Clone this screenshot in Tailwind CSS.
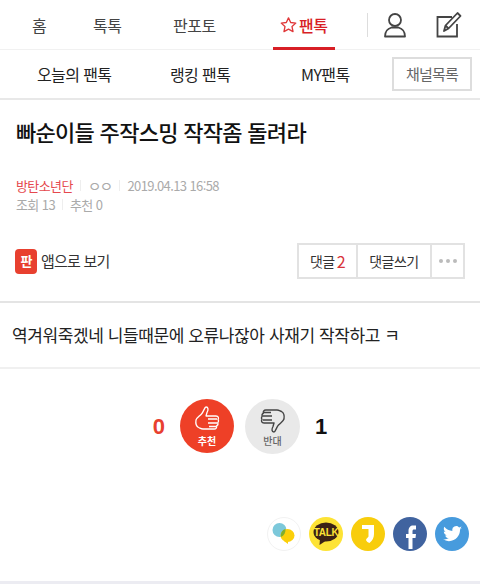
<!DOCTYPE html>
<html lang="ko">
<head>
  <meta charset="UTF-8">
  <title>팬톡</title>
  <script src="https://cdn.jsdelivr.net/npm/@tailwindcss/browser@4"></script>
</head>
<body class="w-[480px] h-[584px] overflow-hidden bg-white font-['Noto_Sans_CJK_KR','Noto_Sans',sans-serif] text-[#222]">

  <!-- top nav -->
  <nav class="h-[50px] flex items-center border-b border-[#f1f1f1] text-[16px] text-[#444] tracking-[-0.5px]">
    <a class="w-[80px] pl-[32px]">홈</a>
    <a class="w-[80px] pl-[13px]">톡톡</a>
    <a class="w-[107px] pl-[13px]">판포토</a>
    <a class="relative w-[101px] h-full flex items-center gap-[1px] pl-[12px] text-[#d81f26] font-medium">
      <svg width="19" height="18" viewBox="0 0 24 24" fill="none" stroke="#e0393a" stroke-width="1.8" stroke-linejoin="round"><path d="M12 2.500l2.900 6.200 6.800.8-5 4.600 1.300 6.700-6-3.300-6 3.300 1.300-6.700-5-4.600 6.800-.8z"/></svg>
      팬톡
      <span class="absolute left-[6px] bottom-[-1px] w-[62px] h-[3px] bg-[#d81f26]"></span>
    </a>
    <span class="w-px h-[24px] bg-[#ddd] -ml-[1px]"></span>
    <svg class="ml-[15px]" width="24" height="26" viewBox="0 0 24 26" fill="none" stroke="#444" stroke-width="1.800"><circle cx="12" cy="8" r="6"/><path d="M2 24.500c0-5 3-8 6.500-9h7c3.500 1 6.500 4 6.500 9z" stroke-linejoin="round"/></svg>
    <svg class="ml-[29px]" width="26" height="27" viewBox="0 0 26 27" fill="none" stroke="#444" stroke-width="1.800"><path d="M16 6H1.500v19.500H21V13"/><path d="M8 20l1.500-5.500L21.500 2l3 3-12 12.500z" stroke-linejoin="round"/><path d="M9.500 14.500l3 3"/></svg>
  </nav>

  <!-- sub nav -->
  <div class="h-[50px] flex items-center border-b-[2px] border-[#e8e8e8] text-[16px] text-[#222] tracking-[-0.6px]">
    <a class="w-[170px] pl-[37px]">오늘의 팬톡</a>
    <a class="w-[131px]">랭킹 팬톡</a>
    <a class="w-[91px]">MY팬톡</a>
    <a class="w-[80px] h-[34px] flex items-center justify-center border-2 border-[#ddd] text-[15px] tracking-[-0.8px] text-[#666]">채널목록</a>
  </div>

  <!-- title -->
  <h1 class="pl-[16px] pt-[15px] h-[76px] text-[22px] leading-[32px] font-medium text-[#111] tracking-[-0.7px]">빠순이들 주작스밍 작작좀 돌려라</h1>

  <!-- meta -->
  <div class="pl-[16px] text-[13px] leading-[19px] text-[#aaa] tracking-[-0.6px]">
    <div class="flex items-center h-[19px]">
      <span class="text-[#e5484d]">방탄소년단</span>
      <span class="w-px h-[11px] bg-[#eee] mx-[7px]"></span>
      <span class="text-[15px] leading-[19px] tracking-[-2px]">ㅇㅇ</span>
      <span class="w-px h-[11px] bg-[#eee] ml-[8px] mr-[7px]"></span>
      <span>2019.04.13 16:58</span>
    </div>
    <div class="flex items-center h-[19px]">
      <span>조회 13</span>
      <span class="w-px h-[11px] bg-[#eee] mx-[7px]"></span>
      <span>추천 0</span>
    </div>
  </div>

  <!-- app link + comment buttons -->
  <div class="h-[36px] mt-[29px] pr-[15px] pl-[15px] flex items-center justify-between">
    <div class="flex items-center gap-[4px] text-[15px] text-[#333] tracking-[-0.8px]">
      <span class="w-[22px] h-[25px] rounded-[4px] bg-[#e8402f] flex items-center justify-center text-white text-[13px] font-bold">판</span>
      앱으로 보기
    </div>
    <div class="flex h-[36px] border-2 border-[#e2e2e2] text-[14px] text-[#333] tracking-[-0.5px]">
      <span class="w-[59px] flex items-center justify-center gap-[2px] border-r-2 border-[#e2e2e2]">댓글 <b class="font-normal text-[16px] text-[#d8343a]">2</b></span>
      <span class="w-[74px] flex items-center justify-center border-r-2 border-[#e2e2e2]">댓글쓰기</span>
      <span class="w-[31px] flex items-center justify-center gap-[3px]">
        <i class="w-[4px] h-[4px] rounded-full bg-[#bbb]"></i><i class="w-[4px] h-[4px] rounded-full bg-[#bbb]"></i><i class="w-[4px] h-[4px] rounded-full bg-[#bbb]"></i>
      </span>
    </div>
  </div>

  <!-- body -->
  <div class="mt-[22px] h-[68px] border-y-[2px] border-t-[#e4e4e4] border-b-[#f0f0f0] pl-[12px] flex items-center text-[17px] text-[#222] tracking-[-0.4px]">역겨워죽겠네 니들때문에 오류나잖아 사재기 작작하고 ㅋ</div>

  <!-- votes -->
  <div class="mt-[28px] h-[58px] flex items-center">
    <span class="w-[165px] text-right text-[22px] font-bold text-[#e8402f] font-['Liberation_Sans',sans-serif]">0</span>
    <div class="ml-[15px] w-[54px] h-[54px] rounded-full bg-[#ee4027] flex flex-col items-center justify-center text-white">
      <svg width="26" height="27" viewBox="0 0 26 27" fill="none" stroke="#fff" stroke-width="1.300" stroke-linejoin="round"><path d="M12 1c2.500 0 2.500 3 1 5.500L12 10h10c2.500 0 3 2 2 3.500.8 1 .6 2.500-.3 3.200.5 1.300 0 2.600-1 3 .3 1.800-.7 3.300-2.500 3.300H9c-2 0-3-1-4.500-1.500C2 20 1.500 17 2 14c.5-2 3-3.500 5.500-6C9.500 6 10.500 1 12 1z"/><path d="M14 13h9M14 17h9M15 20.500h7"/></svg>
      <span class="text-[10px] leading-[12px] font-bold mt-[2px]">추천</span>
    </div>
    <div class="ml-[11px] w-[55px] h-[55px] rounded-full bg-[#e9e9e9] flex flex-col items-center justify-center text-[#666]">
      <svg width="26" height="27" viewBox="0 0 26 27" fill="none" stroke="#444" stroke-width="1.400" stroke-linejoin="round"><path d="M14 26c-2.500 0-2.500-3-1-5.500L14 17H4c-2.500 0-3-2-2-3.500-.8-1-.6-2.500.3-3.200-.5-1.300 0-2.600 1-3-.3-1.800.7-3.300 2.500-3.300h11.200c2 0 3 1 4.500 1.500C24 7 24.500 10 24 13c-.5 2-3 3.500-5.500 6-2 2-3 7-4.500 7z"/><path d="M12 14H3M12 10H3M11 6.500H4"/></svg>
      <span class="text-[10px] leading-[12px] font-medium mt-[2px]">반대</span>
    </div>
    <span class="ml-[15px] text-[22px] font-bold text-[#111] font-['Liberation_Sans',sans-serif]">1</span>
  </div>

  <!-- share -->
  <div class="mt-[62px] pr-[11px] flex justify-end gap-[8px]">
    <span class="w-[34px] h-[34px] rounded-full border border-[#f2f2f2] flex items-center justify-center">
      <svg width="26" height="26" viewBox="0 0 26 26"><circle cx="8.500" cy="9" r="7" fill="#7cc8da"/><ellipse cx="16.500" cy="14.500" rx="7" ry="6.500" fill="#fbcf0a"/><path d="M13 20l4 3 0-3z" fill="#fbcf0a"/><path d="M9.900 15.900a7 7 0 0 0 4.500-7.800 6.500 6.500 0 0 0-4.500 7.800z" fill="#7fae2f"/></svg>
    </span>
    <span class="w-[34px] h-[34px] rounded-full bg-[#fde335] flex items-center justify-center">
      <svg width="26" height="24" viewBox="0 0 26 24"><ellipse cx="13" cy="10" rx="12.500" ry="9.500" fill="#3c2216"/><path d="M7 17l-.5 6 6-4z" fill="#3c2216"/><text x="13" y="14" text-anchor="middle" font-family="Liberation Sans" font-size="10" font-weight="700" letter-spacing="-0.3" fill="#fde335">TALK</text></svg>
    </span>
    <span class="w-[34px] h-[34px] rounded-full bg-[#f8cd0c] flex items-center justify-center">
      <svg width="12" height="18" viewBox="0 0 12 18"><path d="M0 0h12v9c0 3.500-1.500 6.500-4.500 9-1.500-.5-3-1.500-3.500-3 .5-2 2-2.500 2.500-3.500V4H0z" fill="#fff"/></svg>
    </span>
    <span class="w-[34px] h-[34px] rounded-full bg-[#40639f] flex items-end justify-center overflow-hidden text-white">
      <svg class="mb-[2px] ml-[1px]" width="12" height="24" viewBox="0 0 12 24"><path d="M3.500 24V13H1V9h2.500V6c0-3.500 2-5.500 4.500-5.500h3v4H9.200C8 4.500 7.500 5 7.500 6.500V9H11l-.5 4H7.500v11z" fill="#fff"/></svg>
    </span>
    <span class="w-[34px] h-[34px] rounded-full bg-[#479bdd] flex items-center justify-center">
      <svg width="19" height="16" viewBox="0 0 24 20"><path d="M24 2.400c-.9.400-1.800.7-2.800.8 1-.6 1.800-1.600 2.200-2.700-1 .6-2 1-3.100 1.200A4.900 4.900 0 0 0 11.900 6.200C7.800 6 4.200 4 1.700.9c-1.300 2.200-.6 5.100 1.500 6.500-.8 0-1.600-.2-2.200-.6 0 2.400 1.700 4.400 3.900 4.900-.7.200-1.500.2-2.200.1.600 1.900 2.400 3.300 4.600 3.400A9.900 9.900 0 0 1 0 16.700 14 14 0 0 0 7.500 19c9.100 0 14.300-7.700 14-14.600 1-.7 1.800-1.500 2.500-2z" fill="#fff"/></svg>
    </span>
  </div>

  <div class="mt-[30px] h-[3px] bg-[#ececf2]"></div>
</body>
</html>
